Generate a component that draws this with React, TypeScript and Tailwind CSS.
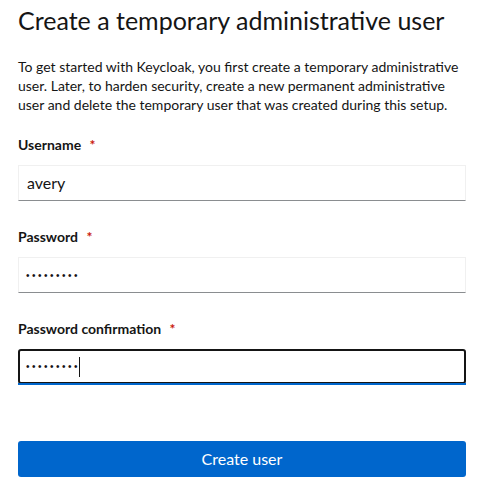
export default function App() {
  const font = { fontFamily: 'Lato, "Open Sans", sans-serif' };
  const dots = { fontFamily: '"Liberation Sans", Arial, sans-serif' };
  return (
    <div className="w-[496px] h-[504px] bg-white pl-[18px] pr-[30px] pt-[4px]" style={font}>
      <h1 className="text-[25px] leading-[32px] text-[#151515] mb-[21px]">
        Create a temporary administrative user
      </h1>
      <p className="text-[14px] leading-[19px] text-[#151515] mb-[20px]">
        To get started with Keycloak, you first create a temporary administrative user. Later, to harden security, create a new permanent administrative user and delete the temporary user that was created during this setup.
      </p>

      <div className="flex flex-col gap-[25px]">
        <div>
          <label className="block text-[14px] leading-[21px] font-bold text-[#151515] mb-[10px]">
            Username <span className="text-[#c9190b] ml-[5px]">*</span>
          </label>
          <div className="h-[36px] border border-[#f0f0f0] border-b-[#8a8d90] flex items-center px-[8px] text-[16px] text-[#151515]">
            avery
          </div>
        </div>

        <div>
          <label className="block text-[14px] leading-[21px] font-bold text-[#151515] mb-[10px]">
            Password <span className="text-[#c9190b] ml-[5px]">*</span>
          </label>
          <div className="h-[36px] border border-[#f0f0f0] border-b-[#8a8d90] flex items-center px-[7px] text-[#151515]">
            <span className="text-[10px] tracking-[2.5px]" style={dots}>•••••••••</span>
          </div>
        </div>

        <div>
          <label className="block text-[14px] leading-[21px] font-bold text-[#151515] mb-[10px]">
            Password confirmation <span className="text-[#c9190b] ml-[5px]">*</span>
          </label>
          <div className="relative h-[36px]">
            <div className="absolute inset-x-0 top-0 h-[35px] border-2 border-[#151515] rounded-[3px] flex items-center px-[6px] text-[#151515]">
              <span className="text-[10px] tracking-[2.5px]" style={dots}>•••••••••</span>
              <span className="inline-block w-[1px] h-[20px] bg-[#151515] -ml-[1px]" />
            </div>
            <div className="absolute inset-x-0 bottom-0 h-[2px] bg-[#0066cc]" />
          </div>
        </div>
      </div>

      <button className="mt-[56px] w-full h-[36px] rounded-[3px] bg-[#0066cc] text-white text-[16px]">
        Create user
      </button>
    </div>
  );
}
